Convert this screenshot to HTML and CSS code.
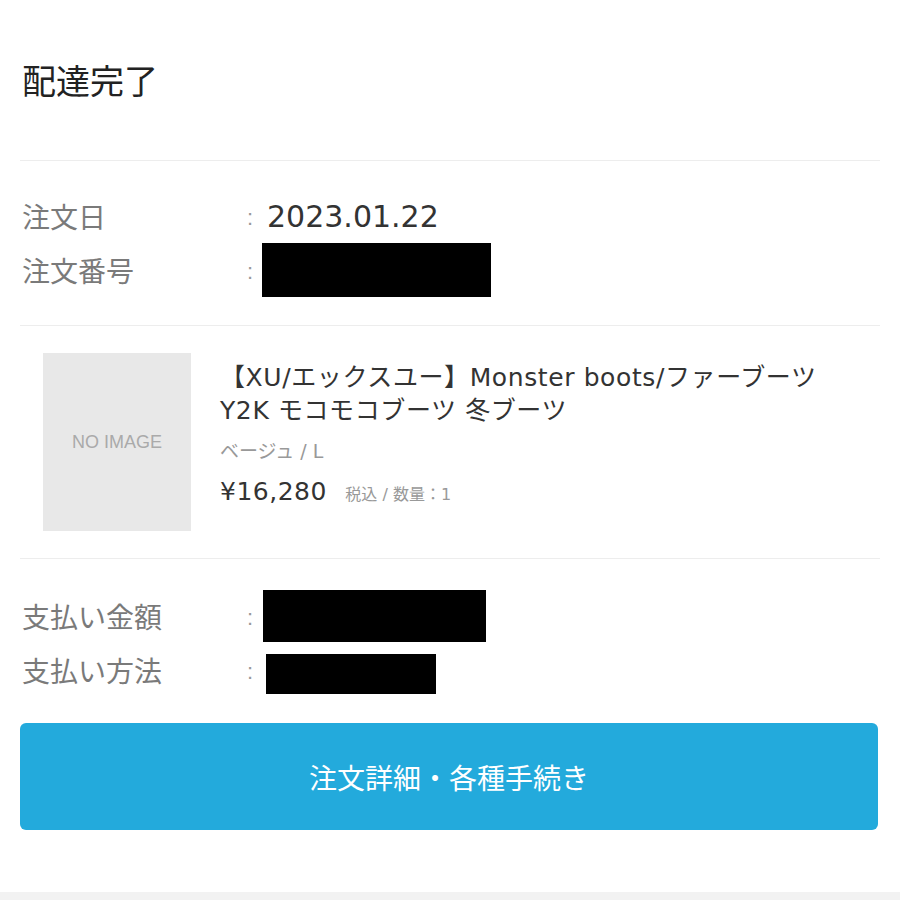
FILE: index.html
```html
<!DOCTYPE html>
<html lang="ja">
<head>
  <meta charset="UTF-8">
  <title>配達完了</title>
  <meta name="viewport" content="width=device-width, initial-scale=1.0">
  <link rel="stylesheet" href="styles.css">
</head>
<body>

<main class="order">
  <h1 class="order-status">配達完了</h1>

  <section class="info">
    <div class="info-row">
      <span class="label">注文日</span>
      <span class="colon">:</span>
      <span class="value">2023.01.22</span>
    </div>
    <div class="info-row">
      <span class="label">注文番号</span>
      <span class="colon">:</span>
      <span class="value"><span class="redact redact-order"></span></span>
    </div>
  </section>

  <section class="item">
    <div class="thumb">NO IMAGE</div>
    <div class="item-body">
      <p class="item-name">【XU/エックスユー】Monster boots/ファーブーツ Y2K モコモコブーツ 冬ブーツ</p>
      <p class="item-variant">ベージュ / L</p>
      <p class="item-price">¥16,280 <small>税込 / 数量：1</small></p>
    </div>
  </section>

  <section class="info info-pay">
    <div class="info-row">
      <span class="label">支払い金額</span>
      <span class="colon">:</span>
      <span class="value"><span class="redact redact-total"></span></span>
    </div>
    <div class="info-row">
      <span class="label">支払い方法</span>
      <span class="colon">:</span>
      <span class="value"><span class="redact redact-method"></span></span>
    </div>
  </section>

  <a class="detail-btn" href="#">注文詳細・各種手続き</a>
</main>

<footer class="page-foot"></footer>

</body>
</html>
```

FILE: styles.css
```css
* { box-sizing: border-box; }
body {
  margin: 0; background: #fff; color: #333;
  font-family: "Liberation Sans", "Noto Sans CJK JP", sans-serif;
}
.order { padding: 58px 20px 62px; }
.order-status {
  margin: 0; font-size: 34px; font-weight: 400; line-height: 48px; color: #222; padding-left: 2px;
}

.info { border-top: 1px solid #ededed; margin-top: 54px; padding: 28px 0; }
.info-row { display: grid; grid-template-columns: 216px 28px 1fr; align-items: center; height: 54px; font-size: 28px; }
.label { color: #7a7a7a; padding-left: 2px; }
.colon { color: #999; text-align: center; font-size: 22px; padding-top: 3px; }
.value {
  color: #333; padding-left: 3px; display: flex; align-items: center;
  font-family: "DejaVu Sans", "Noto Sans CJK JP", sans-serif; font-size: 30px;
}
.redact { display: block; background: #000; }
.redact-order { width: 229px; height: 54px; margin-left: -5px; }
.redact-total { width: 223px; height: 52px; margin-left: -4px; }
.redact-method { width: 170px; height: 40px; margin-top: 8px; margin-left: -1px; }

.item {
  display: flex; gap: 29px; padding: 27px 0 27px 23px;
  border-top: 1px solid #ededed; border-bottom: 1px solid #ededed;
}
.thumb {
  flex: 0 0 148px; height: 178px; background: #e8e8e8; color: #aaa;
  display: flex; align-items: center; justify-content: center;
  font-size: 18px;
}
.item-body {
  padding-top: 8px; max-width: 630px;
  font-family: "DejaVu Sans", "Noto Sans CJK JP", sans-serif;
}
.item-body p { margin: 0; }
.item-name { font-size: 25px; line-height: 33px; color: #333; letter-spacing: 0.6px; }
.item-variant { font-size: 19px; line-height: 33px; color: #999; margin-top: 8px !important; }
.item-price { font-size: 25px; line-height: 36px; color: #333; margin-top: 6px !important; letter-spacing: 0.5px; }
.item-price small { font-size: 16px; color: #999; margin-left: 10px; letter-spacing: 0; }

.info-pay { border-top: none; margin-top: 0; padding: 30px 0 26px; }

.detail-btn {
  display: flex; align-items: center; justify-content: center; height: 107px; margin-right: 2px;
  background: #23aadc; color: #fff; border-radius: 6px; text-decoration: none; font-size: 28px;
}
.page-foot { background: #f2f2f2; height: 10px; }
```
